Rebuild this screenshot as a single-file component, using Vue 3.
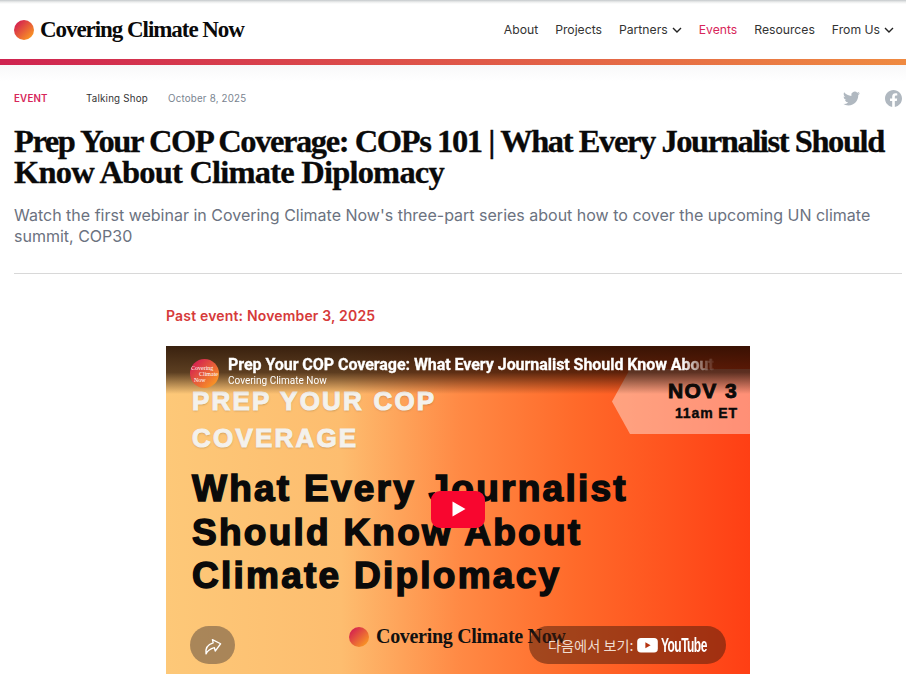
<template>
  <div class="page">
    <header class="site-header">
      <a class="logo">
        <span class="logo-dot"></span>
        <span class="logo-text">Covering Climate Now</span>
      </a>
      <nav class="nav">
        <a v-for="item in navItems" :key="item.label" :class="{ active: item.active }">
          {{ item.label }}
          <svg v-if="item.menu" class="chev" viewBox="0 0 10 6" width="10" height="6">
            <path d="M1 1l4 4 4-4" fill="none" stroke="#222" stroke-width="1.4" />
          </svg>
        </a>
      </nav>
    </header>
    <div class="rainbow"></div>

    <main class="content">
      <div class="meta">
        <span class="kind">EVENT</span>
        <span class="series">Talking Shop</span>
        <span class="date">October 8, 2025</span>
        <span class="social">
          <svg viewBox="0 0 24 24" width="17" height="17">
            <path fill="#b0b8c0" d="M23.95 4.57a10 10 0 0 1-2.82.77 4.96 4.96 0 0 0 2.16-2.72c-.95.55-2 .96-3.13 1.2a4.92 4.92 0 0 0-8.38 4.48C7.69 8.1 4.07 6.13 1.64 3.16a4.82 4.82 0 0 0-.66 2.47c0 1.71.87 3.21 2.19 4.1a4.9 4.9 0 0 1-2.23-.62v.06a4.92 4.92 0 0 0 3.95 4.83 5 5 0 0 1-2.21.08 4.94 4.94 0 0 0 4.6 3.42A9.87 9.87 0 0 1 0 19.54a13.94 13.94 0 0 0 7.55 2.21c9.05 0 14-7.5 14-13.98 0-.21 0-.42-.02-.63a9.94 9.94 0 0 0 2.46-2.55z" />
          </svg>
          <svg viewBox="0 0 24 24" width="17" height="17">
            <path fill="#b0b8c0" d="M24 12.07C24 5.4 18.63 0 12 0S0 5.4 0 12.07c0 6.03 4.39 11.02 10.13 11.93v-8.44H7.08v-3.49h3.05V9.41c0-3.02 1.79-4.69 4.53-4.69 1.31 0 2.68.24 2.68.24v2.97h-1.51c-1.49 0-1.96.93-1.96 1.89v2.25h3.33l-.53 3.49h-2.8V24C19.61 23.09 24 18.1 24 12.07z" />
          </svg>
        </span>
      </div>

      <h1 class="title">Prep Your COP Coverage: COPs 101 | What Every Journalist Should <span class="title-end">Know About Climate Diplomacy</span></h1>
      <p class="lede">Watch the first webinar in Covering Climate Now's three-part series about how to cover the upcoming UN climate summit, COP30</p>
      <hr class="rule" />

      <section class="event">
        <p class="past">Past event: November 3, 2025</p>
        <div class="video">
          <div class="thumb-heading">
            <div>PREP YOUR COP</div>
            <div>COVERAGE</div>
          </div>
          <div class="thumb-main">
            <div>What Every Journalist</div>
            <div>Should Know About</div>
            <div>Climate Diplomacy</div>
          </div>
          <div class="thumb-logo">
            <span class="logo-dot small"></span>
            <span>Covering Climate Now</span>
          </div>
          <div class="tag">
            <div class="tag-day">NOV 3</div>
            <div class="tag-time">11am ET</div>
          </div>

          <div class="shade"></div>

          <div class="yt-top">
            <div class="channel">
              <span>Covering</span>
              <span class="ind1">Climate</span>
              <span class="ind2">Now</span>
            </div>
            <div class="yt-text">
              <div class="yt-title">Prep Your COP Coverage: What Every Journalist Should Know About C</div>
              <div class="yt-sub">Covering Climate Now</div>
            </div>
          </div>

          <svg class="play" viewBox="0 0 54 38" width="54" height="38">
            <rect width="54" height="37" rx="9" fill="#f8062f" />
            <path d="M21.500 10.500v15l13-7.500z" fill="#fff" />
          </svg>

          <div class="share">
            <svg class="share-icon" viewBox="0 0 24 24" width="21" height="21">
              <path d="M13.500 5.500l8 6.800-8 6.600v-3.900c-4.500 0-8 .9-11 4.500.5-5.500 4-10 11-10.300z" fill="none" stroke="#fff" stroke-width="1.500" stroke-linejoin="round" />
            </svg>
          </div>
          <div class="watch">
            <span class="watch-label">다음에서 보기:</span>
            <svg class="yt-icon" viewBox="0 0 22 16" width="21" height="15">
              <rect width="22" height="15.500" rx="4" fill="#fff" />
              <path d="M8.700 4.500v6.500l5.600-3.250z" fill="#b5330f" />
            </svg>
            <span class="yt-word">YouTube</span>
          </div>
        </div>
      </section>
    </main>
  </div>
</template>

<script setup>
const navItems = [
  { label: 'About' },
  { label: 'Projects' },
  { label: 'Partners', menu: true },
  { label: 'Events', active: true },
  { label: 'Resources' },
  { label: 'From Us', menu: true }
]
</script>

<style>
html, body {
  background: #fff;
  overflow: hidden;
}
</style>

<style scoped>
.page {
  width: 906px;
  height: 685px;
  overflow: hidden;
  font-family: Inter, "Noto Sans", sans-serif;
  color: #222;
}

.site-header {
  height: 59px;
  padding: 0 12px 0 14px;
  box-sizing: border-box;
  display: flex;
  align-items: center;
  justify-content: space-between;
  background: linear-gradient(180deg, #c4c8cb 0, #eceded 2px, #fff 4px);
}

.logo {
  display: flex;
  align-items: center;
  gap: 6px;
}

.logo-dot {
  width: 20px;
  height: 20px;
  border-radius: 50%;
  background: linear-gradient(135deg, #d5254f 15%, #fb9a22 90%);
}

.logo-text {
  font-family: "Liberation Serif", serif;
  font-weight: 700;
  font-size: 23px;
  letter-spacing: -1.05px;
  color: #0a0a0a;
}

.nav {
  display: flex;
  align-items: center;
  gap: 17px;
  font-size: 12.200px;
  color: #333;
}

.nav a {
  display: flex;
  align-items: center;
  gap: 4px;
}

.nav a.active {
  color: #d7265a;
}

.rainbow {
  height: 6px;
  background: linear-gradient(90deg, #cf2350 0%, #ef8a41 100%);
}

.content {
  padding: 0 4px 0 14px;
  background: linear-gradient(180deg, #f8f8f9 0, #fff 16px);
}

.meta {
  height: 26px;
  padding-top: 20px;
  display: flex;
  align-items: center;
  font-size: 9.750px;
  letter-spacing: 0.2px;
}

.kind {
  width: 72px;
  font-weight: 600;
  color: #d7265a;
  letter-spacing: 0.2px;
}

.series {
  width: 82px;
  color: #333;
}

.date {
  color: #7a8490;
}

.social {
  margin-left: auto;
  display: flex;
  align-items: center;
  gap: 25px;
}

.title {
  margin: 15px 0 0;
  font-family: "Liberation Serif", serif;
  font-size: 32.500px;
  font-weight: 700;
  line-height: 31px;
  letter-spacing: -1.42px;
  -webkit-text-stroke: 0.3px #0a0a0a;
  color: #0a0a0a;
}

.title-end {
  letter-spacing: -0.8px;
}

.lede {
  margin: 17px 0 0;
  font-size: 16px;
  line-height: 21px;
  color: #6b7280;
}

.rule {
  margin: 26px 0 0;
  border: 0;
  border-top: 1px solid #d8d8d8;
}

.event {
  margin-left: 152px;
  width: 584px;
}

.past {
  margin: 0;
  padding-top: 33px;
  height: 39px;
  font-size: 14px;
  line-height: 18px;
  font-weight: 600;
  letter-spacing: 0.17px;
  color: #d63a3a;
}

.video {
  position: relative;
  width: 584px;
  height: 328px;
  overflow: hidden;
  background: linear-gradient(90deg, #fdc878 0%, #fdbd6f 30%, #ff8a45 50%, #ff6a2a 70%, #ff3f14 100%);
}

.thumb-heading {
  position: absolute;
  left: 26px;
  top: 37px;
  font-family: "Liberation Sans", sans-serif;
  font-weight: 700;
  font-size: 26px;
  line-height: 37px;
  letter-spacing: 2.200px;
  color: #f4f1ec;
  -webkit-text-stroke: 1.100px #f4f1ec;
  text-shadow: 0 1px 2px rgba(90, 60, 30, 0.35);
}

.thumb-main {
  position: absolute;
  left: 26px;
  top: 121px;
  font-family: "Liberation Sans", sans-serif;
  font-weight: 700;
  font-size: 37px;
  line-height: 43.500px;
  letter-spacing: 2.250px;
  color: #0a0a0a;
  -webkit-text-stroke: 1.500px #0a0a0a;
}

.thumb-logo {
  position: absolute;
  left: 183px;
  top: 279px;
  display: flex;
  align-items: center;
  gap: 7px;
  font-family: "Liberation Serif", serif;
  font-weight: 700;
  font-size: 20px;
  letter-spacing: -0.3px;
  color: #111;
}

.logo-dot.small {
  display: block;
}

.tag {
  position: absolute;
  left: 446px;
  top: 23px;
  width: 138px;
  height: 65px;
  box-sizing: border-box;
  padding: 9px 12px 0 0;
  text-align: right;
  clip-path: polygon(18px 0, 100% 0, 100% 100%, 18px 100%, 0 50%);
  background: rgba(255, 255, 255, 0.42);
  font-family: "Liberation Sans", sans-serif;
  font-weight: 700;
  color: #0a0a0a;
}

.tag-day {
  font-size: 21px;
  line-height: 26px;
  letter-spacing: 1.400px;
  -webkit-text-stroke: 0.9px #0a0a0a;
}

.tag-time {
  font-size: 14px;
  line-height: 18px;
  letter-spacing: 0.9px;
  -webkit-text-stroke: 0.4px #0a0a0a;
}

.shade {
  position: absolute;
  left: 0;
  right: 0;
  top: 0;
  height: 48px;
  background: linear-gradient(180deg, rgba(30, 10, 0, 0.88) 0%, rgba(30, 10, 0, 0.72) 55%, rgba(30, 10, 0, 0) 100%);
}

.yt-top {
  position: absolute;
  left: 24px;
  top: 8px;
  right: 34px;
  display: flex;
  gap: 9px;
}

.channel {
  flex: none;
  margin-top: 5px;
  width: 29px;
  height: 29px;
  box-sizing: border-box;
  padding: 6px 0 0 1px;
  border-radius: 50%;
  overflow: hidden;
  background: linear-gradient(135deg, #d5254f 15%, #fb9a22 90%);
  font-family: "Liberation Serif", serif;
  font-size: 6px;
  line-height: 6px;
  color: #fff;
  display: flex;
  flex-direction: column;
}

.ind1 {
  padding-left: 8px;
}

.ind2 {
  padding-left: 3px;
}

.yt-text {
  min-width: 0;
  flex: 1;
  color: #fff;
  font-family: Roboto, sans-serif;
  -webkit-mask-image: linear-gradient(90deg, #000 93%, transparent 100%);
  mask-image: linear-gradient(90deg, #000 93%, transparent 100%);
}

.yt-title {
  font-size: 16px;
  line-height: 22px;
  font-weight: 700;
  white-space: nowrap;
  overflow: hidden;
  letter-spacing: -0.05px;
  -webkit-text-stroke: 0.3px #fff;
}

.yt-sub {
  font-size: 10px;
  line-height: 12px;
  margin-top: -1px;
}

.play {
  position: absolute;
  left: 265px;
  top: 145px;
}

.share {
  position: absolute;
  left: 24px;
  top: 280px;
  width: 45px;
  height: 38px;
  border-radius: 19px;
  background: rgba(85, 70, 60, 0.5);
  display: flex;
  align-items: center;
  justify-content: center;
}

.share-icon {
  transform: rotate(-14deg);
}

.watch {
  position: absolute;
  left: 363px;
  top: 280px;
  width: 197px;
  height: 38px;
  box-sizing: border-box;
  padding-left: 19px;
  border-radius: 19px;
  background: rgba(70, 25, 10, 0.5);
  display: flex;
  align-items: center;
  gap: 3px;
  font-family: "Noto Sans CJK KR", "Noto Sans", sans-serif;
  font-size: 14.200px;
  color: #f0dcd0;
  white-space: nowrap;
}

.watch-label {
  flex: none;
  margin-right: 1px;
}

.yt-icon {
  flex: none;
}

.yt-word {
  flex: none;
  width: 44px;
  font-family: "Liberation Sans", sans-serif;
  font-size: 20px;
  font-weight: 700;
  letter-spacing: -0.9px;
  color: #fff;
  transform: scaleX(0.6);
  transform-origin: left center;
}
</style>
